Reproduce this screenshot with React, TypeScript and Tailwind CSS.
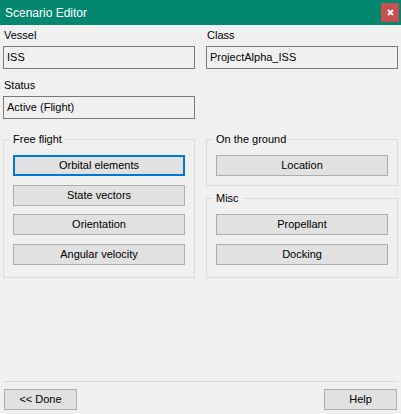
import React from "react";

const font = { fontFamily: '"Liberation Sans", Arial, sans-serif' };

function Btn({ label, focused = false }: { label: string; focused?: boolean }) {
  return (
    <div
      className={
        "h-[21px] w-full flex items-center justify-center bg-[#e1e1e1] text-[11px] leading-[13px] text-black " +
        (focused ? "border-2 border-[#0078d7]" : "border border-[#adadad]")
      }
    >
      {label}
    </div>
  );
}

function Field({ label, value }: { label: string; value: string }) {
  return (
    <div className="flex flex-col">
      <div className="text-[11px] leading-[13px] text-black pl-[1px]">{label}</div>
      <div className="mt-[4px] h-[23px] border border-[#7a7a7a] bg-[#f0f0f0] flex items-center pl-[3px] text-[11px] leading-[13px] text-black">
        {value}
      </div>
    </div>
  );
}

function Group({
  title,
  children,
  pb,
  className = "",
}: {
  title: string;
  children: React.ReactNode;
  pb: string;
  className?: string;
}) {
  return (
    <fieldset className={"border border-[#dcdcdc] px-[9px] pt-[9px] " + pb + " " + className}>
      <legend className="ml-[-3px] px-[3px] text-[11px] leading-[14px] text-black">{title}</legend>
      {children}
    </fieldset>
  );
}

export default function App() {
  return (
    <div className="w-[401px] h-[414px] bg-[#f0f0f0] flex flex-col overflow-hidden" style={font}>
      <div className="h-[25px] bg-[#03876f] flex items-center justify-between pl-[5px] pr-[2px]">
        <span className="text-white text-[12px] leading-[14px]">Scenario Editor</span>
        <div className="w-[18px] h-[19px] bg-[#c75050] flex items-center justify-center">
          <svg width="7" height="7" viewBox="0 0 7 7">
            <path d="M1 1 L6 6 M6 1 L1 6" stroke="white" strokeWidth="1.8" />
          </svg>
        </div>
      </div>

      <div className="px-[3px] pt-[4px] grid grid-cols-2 gap-x-[11px]">
        <div className="flex flex-col">
          <Field label="Vessel" value="ISS" />
          <div className="mt-[10px]">
            <Field label="Status" value="Active (Flight)" />
          </div>
        </div>
        <div className="flex flex-col">
          <Field label="Class" value="ProjectAlpha_ISS" />
        </div>
      </div>

      <div className="px-[3px] mt-[13px] grid grid-cols-2 gap-x-[11px] items-start">
        <Group title="Free flight" pb="pb-[12px]">
          <div className="flex flex-col gap-[8.5px]">
            <Btn label="Orbital elements" focused />
            <Btn label="State vectors" />
            <Btn label="Orientation" />
            <Btn label="Angular velocity" />
          </div>
        </Group>
        <div className="flex flex-col">
          <Group title="On the ground" pb="pb-[9px]">
            <Btn label="Location" />
          </Group>
          <Group title="Misc" pb="pb-[12px]" className="mt-[5px]">
            <div className="flex flex-col gap-[8.5px]">
              <Btn label="Propellant" />
              <Btn label="Docking" />
            </div>
          </Group>
        </div>
      </div>

      <div className="mt-auto mx-[3px] border-t border-[#d9d9d9] pt-[7px] pb-[4px] px-[1px] flex justify-between">
        <div className="w-[73px]">
          <Btn label="<< Done" />
        </div>
        <div className="w-[73px]">
          <Btn label="Help" />
        </div>
      </div>
    </div>
  );
}
